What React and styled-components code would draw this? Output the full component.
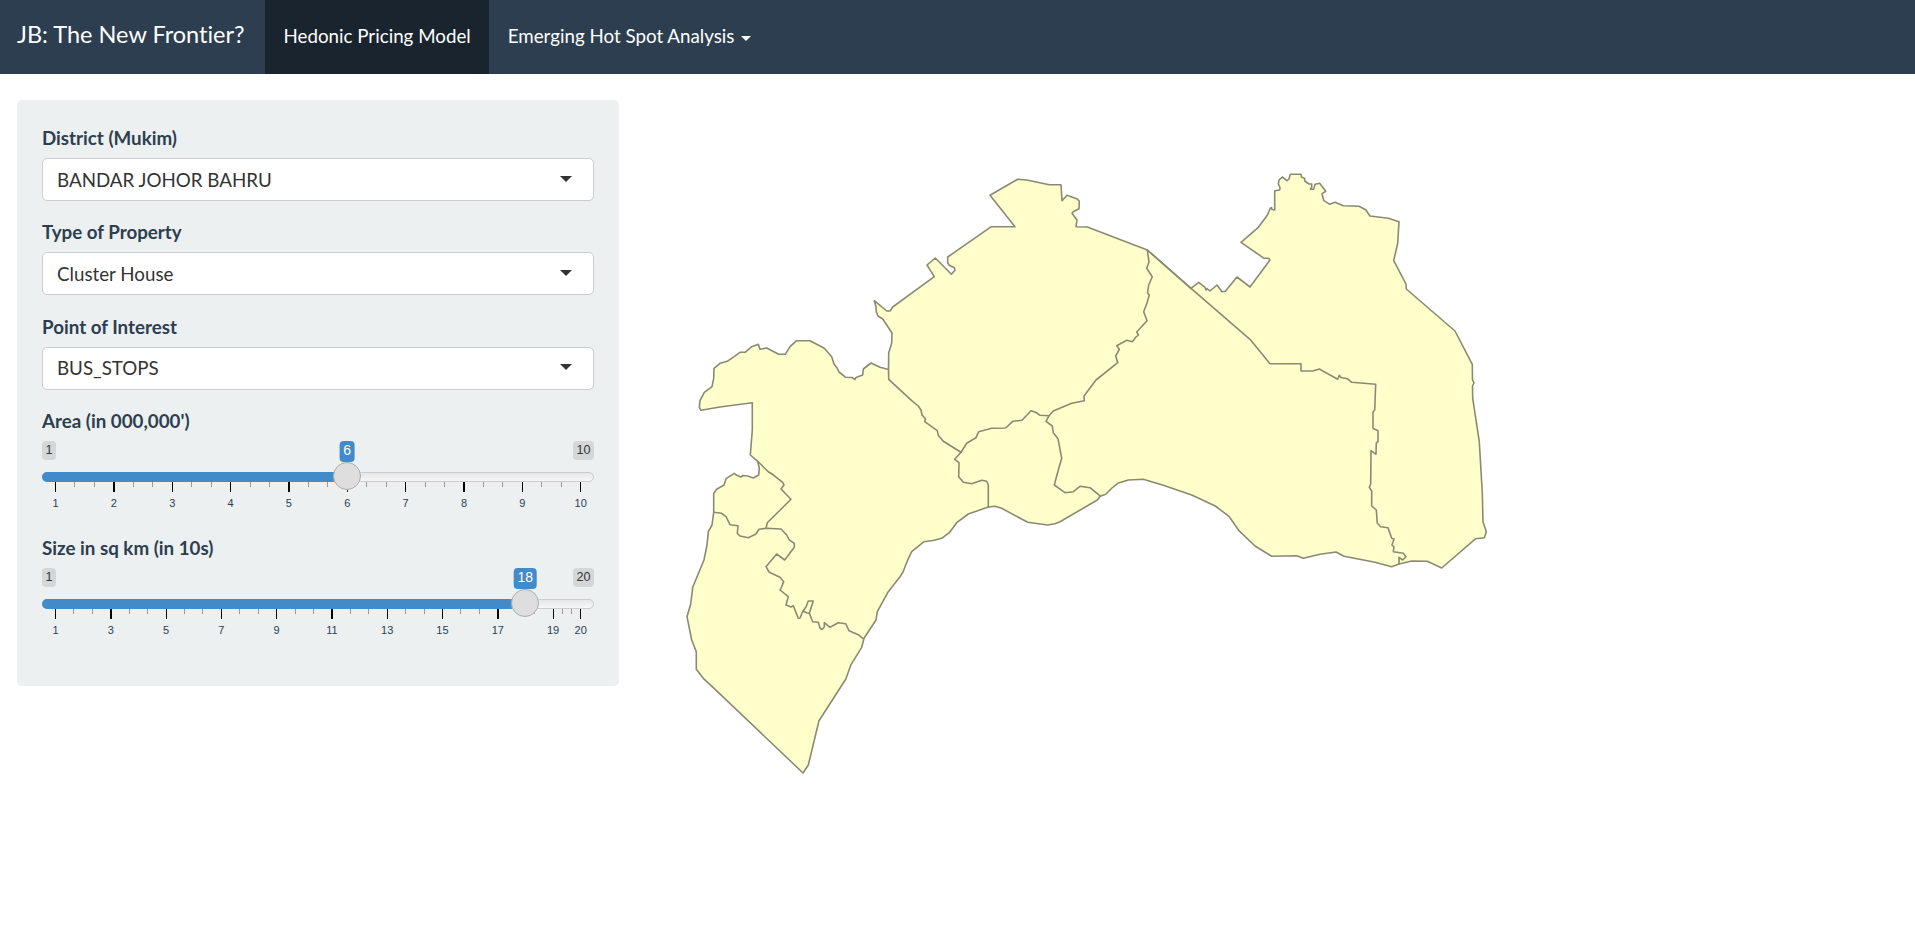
import React from "react";
import styled, { createGlobalStyle } from "styled-components";

const GlobalStyle = createGlobalStyle`
  *, *::before, *::after { box-sizing: border-box; }
  body {
    margin: 0;
    background: #fff;
    color: #2c3e50;
    font-family: Lato, "Liberation Sans", sans-serif;
    font-size: 18.75px;
    font-variant-ligatures: none;
    line-height: 26px;
    overflow: hidden;
  }
`;

const Navbar = styled.nav`
  display: flex;
  height: 74px;
  background: #2c3e50;
  color: #fff;
`;

const Brand = styled.div`
  width: 265px;
  padding: 21px 0 0 17px;
  font-size: 23.5px;
  white-space: nowrap;
`;

const NavItem = styled.div`
  display: flex;
  align-items: flex-start;
  padding: 23px 18.5px 0;
  background: ${(p) => (p.$active ? "#1a242f" : "transparent")};
  white-space: nowrap;
`;

const Caret = styled.span`
  width: 0;
  height: 0;
  border: 5px solid transparent;
  border-top-color: ${(p) => p.$color || "#fff"};
  border-bottom: 0;
`;

const NavCaret = styled(Caret)`
  margin: 13px 0 0 7px;
`;

const Page = styled.main`
  display: flex;
  align-items: flex-start;
  padding: 26px 17px 0;
`;

const Panel = styled.form`
  flex: none;
  width: 602px;
  height: 586px;
  padding: 25px;
  background: #ecf0f1;
  border-radius: 5px;
`;

const Field = styled.div`
  height: ${(p) => p.$height || 94.4}px;
`;

const Label = styled.div`
  height: 33px;
  font-weight: 700;
`;

const Select = styled.div`
  display: flex;
  align-items: center;
  justify-content: space-between;
  height: 43px;
  padding: 0 21px 0 14px;
  background: #fff;
  border: 1px solid #ccc;
  border-radius: 5px;
  color: #333;
`;

const SelectCaret = styled(Caret)`
  border-width: 6px 6px 0;
  margin-top: -2px;
`;

const SliderBox = styled.div`
  position: relative;
  height: 80px;
  font-family: Arial, "Liberation Sans", sans-serif;
`;

const Flags = styled.div`
  display: flex;
  justify-content: space-between;
  height: 31px;
`;

const Flag = styled.span`
  height: 19px;
  padding: 0 3.5px;
  border-radius: 4px;
  background: rgba(0, 0, 0, 0.1);
  color: #333;
  font-size: 12.6px;
  line-height: 18px;
`;

const Track = styled.div`
  height: 10px;
  border: 1px solid #ccc;
  border-radius: 8px;
  background: linear-gradient(#dedede -50%, #fff 150%);
`;

const Fill = styled.div`
  width: ${(p) => p.$to}px;
  height: 10px;
  margin: -1px;
  border-radius: 8px 0 0 8px;
  background: #428bca;
`;

const Handle = styled.span`
  position: absolute;
  left: ${(p) => p.$x}px;
  top: 21px;
  width: 28px;
  height: 28px;
  border: 1px solid #ababab;
  border-radius: 50%;
  background: #dedede;
  box-shadow: 1px 1px 3px rgba(255, 255, 255, 0.3);
  transform: translateX(-50%);
`;

const Value = styled.span`
  position: absolute;
  left: ${(p) => p.$x}px;
  top: 0;
  height: 21px;
  padding: 0 3.5px;
  border-radius: 4px;
  background: #428bca;
  color: #fff;
  font-size: 14px;
  line-height: 19px;
  transform: translateX(-50%);
`;

const Tick = styled.span`
  position: absolute;
  left: ${(p) => p.$x}px;
  top: 41px;
  width: ${(p) => (p.$major ? 1.25 : 1)}px;
  height: ${(p) => (p.$major ? 10 : 5)}px;
  background: ${(p) => (p.$major ? "#000" : "#999")};
`;

const TickLabel = styled.span`
  position: absolute;
  left: ${(p) => p.$x}px;
  top: 55px;
  font-size: 11px;
  line-height: 14px;
  transform: translateX(-50%);
`;

const MapArea = styled.section`
  flex: 1;
  padding: 60px 0 0 61px;
`;

const MapSvg = styled.svg`
  display: block;
  width: 820px;
  height: 620px;
`;

const RAIL_START = 13;
const RAIL_LENGTH = 525.2;

function Slider({ min, max, value, stops }) {
  const at = (v) => RAIL_START + ((v - min) / (max - min)) * RAIL_LENGTH;
  const minors = stops.slice(1).flatMap((s, i) => {
    const gap = (s - stops[i]) / 3;
    return [stops[i] + gap, stops[i] + gap * 2];
  });
  return (
    <SliderBox>
      <Flags>
        <Flag>{min}</Flag>
        <Flag>{max}</Flag>
      </Flags>
      <Track>
        <Fill $to={at(value)} />
      </Track>
      {minors.map((v) => (
        <Tick key={v} $x={at(v)} />
      ))}
      {stops.map((v) => (
        <Tick key={v} $x={at(v)} $major />
      ))}
      {stops.map((v) => (
        <TickLabel key={v} $x={at(v) + 0.5}>{v}</TickLabel>
      ))}
      <Handle $x={at(value) + 0.3} />
      <Value $x={at(value) + 0.3}>{value}</Value>
    </SliderBox>
  );
}

const OUTLINE =
  "888.5,369.5 888.7,352.7 891.7,343.3 892,333 882.7,319 878,316 876.3,311.7 876,306.7 874.3,300.7 886.7,311 890,311 892.7,307 934.3,276.7 927,265 935.3,258 951.3,274.3 955,270.3 954.3,267.7 949.3,265.3 947.7,263 947.7,257 991.3,226.7 1015,226.7 990,195.3 1017.7,179.3 1026.7,180 1049.3,184.7 1061,184.7 1062,200.7 1067,195.3 1077.3,199 1079.3,201.3 1079,208.7 1073.3,211.7 1072,213.3 1077,220 1076,226.7 1087.3,227 1147.3,250 " +
  "1191,288.3 1198.7,282.3 1205,287.3 1206,290 1207,288.5 1210,291 1217,285 1222,291.7 1225.3,291.3 1237,277 1250,287 1270,260 1268.7,258.3 1264,258.3 1241,242.3 1258.3,227.3 1267.3,215.3 1270.3,208.3 1271.5,207.5 1272,209.5 1274.7,210 1274.7,190.7 1279.7,190 1280,187.5 1278.3,184 1279,180 1282.3,177 1287,180.7 1289,179 1290.3,174.3 1301,174.3 1301.5,177 1304.7,178.5 1304.7,181 1309,184 1311.7,184 1311.7,187 1310.3,189.3 1313.7,189.3 1315,184.3 1319.7,183.3 1325.7,191.3 1322,193.7 1323.7,200.3 1329.7,204.3 1335,202.3 1343.3,205.7 1359,206.3 1365.7,209.7 1370,216 1388.3,218.3 1399,221.7 1397.7,243.3 1393.7,260.7 1406,284 1406.3,289 1455,331 1472.3,364.3 " +
  "1472.5,380 1474,383 1472.5,386 1472.7,398.3 1479.3,441.7 1482.3,493.3 1483,521.7 1486.3,531.7 1484.3,537.7 1475.7,538.7 1441.7,568 1427.3,561.3 1411.7,561 1399,564 1391.7,566.7 1375,562.3 1344,556.3 1336,552 1320,554.3 1303.3,558.3 1296.7,555.7 1271.7,556.3 1255,546 1239,530.7 1229.3,516.7 1215.3,506 1191.7,495 1163.3,485.3 1143.3,479.3 1128.3,480 1117.7,483.3 1112,488 1105.7,494.3 1100,496.3 1097.3,500 1060,521.7 1055,523.7 1047.7,525 1027.7,522.3 1001.7,508.3 995,506.3 988.3,507 968.3,514 956.7,522.7 949.3,532.7 941.7,538.3 933,540.5 924,541.7 911.7,551.7 907.7,560 " +
  "903,572 900,576.7 888.3,591.7 877.3,611.7 876,620 864,638.3 861.7,647.3 851,664.7 845.7,679.3 819,720.7 808.3,765 803,773 713.3,687.7 703.3,678.3 696.3,669.3 696.3,651.7 691.7,640 687,616.7 690.7,604 692.7,587.3 704,560 707,545 708.3,531.7 712,525 713.7,512.3 713.7,493.3 716.7,489.3 724,485 726,478.7 734.3,473.3 736.7,475.3 741,477 743,475.5 747.7,476 753.3,478 758.7,475 759.3,468.3 757.7,461.3 750.3,455 752.3,430 752.3,402.7 720,407 701,410.3 699.3,407.3 700,400.7 704.3,392.3 712,386.7 713.7,378.3 714,368.3 720,363.3 727.3,361.3 740,352.3 745,352.3 751.7,346.7 758.3,344.3 760,349.3 766.7,348 778.7,354.3 785.3,354.3 790,346.7 796.7,340.7 810,340.7 824.3,348.3 831.7,356.7 834,364 837.3,368.3 839,372 845.7,377.3 852,377.5 855,379.5 856,377.5 862.7,375 863.3,369 871,363 880,367.3";

const BORDERS = [
  "888.5,369.5 888.7,379.3 911.7,400.7 918.3,406 921,410 922,415 925.5,419 924.7,421.7 937.3,430.7 938.3,435.3 943.3,441.3 961,452.3",
  "961,452.3 966.7,443.3 976,437.7 978.7,431.7 991.7,428.3 1005.7,428 1012.7,421.3 1022,420.3 1031,410.7 1036,412.5 1040,415.3 1049,415.7 1053.3,411 1063.3,406.7 1071.7,403.3 1084.3,400.7 1084,396 1096,380 1117.7,362.7 1115.7,356 1119.3,349.3 1116.7,345.7 1126.7,340.3 1132.3,341.7 1136,337 1138.5,335 1136.7,332 1147,320.7 1143.7,311.7 1147,303 1149.3,295 1147.5,293 1148.7,285 1152.3,276.7 1146.7,268.3 1149,262 1147.3,250",
  "961,452.3 954.7,459.3 959,462.7 958.7,476.7 963.3,482.3 971.7,483.7 981.7,480.3 986.7,481.3 988.3,485 988.3,507",
  "1049,415.7 1046,421.3 1052.3,426 1053.3,432.7 1058,438.7 1061.7,458.3 1058,471 1054.3,485 1065,492.7 1073.3,491.7 1080,486.3 1090,487.7 1100.7,496.3",
  "1191,288.3 1250,339.3 1270,363.7 1301,363.7 1301,371 1312.7,371 1319.3,369 1337.7,379.3 1339.3,375.3 1341,377.5 1347.3,378.7 1351.7,382.3 1375.7,384.3 1374.7,410 1373,412 1373,428.3 1378,430.7 1378,441.7 1376.3,443 1376,454.3 1371,450.7 1370.7,484 1369.3,487.3 1371.7,491 1371.7,506 1376.3,510 1377.3,523.3 1380.7,526.7 1388,527.7 1391.7,538.3 1394,539 1392,545 1394,547 1393.3,551.7 1403.3,553.3 1406,556.7 1402.7,560 1399,557.3 1399,564",
  "757.7,461.3 768.3,471.7 772,474 782.7,482.3 784,485 781,489 791,499.3 767.3,522.7 766,528.3",
  "713.7,512.3 721.7,513.3 726,516.7 730,524.7 738,525.7 737.3,533.3 740,536 748.3,537.7 756,534 759,529.3 766,528.3 781,529 786.7,535 789.3,540 794.3,543.3 794.3,547.3 784.7,560 776.7,554 766,566.7 769.3,572.3 780,577.3 783.7,581.7 782,586 780,590 788.3,596.7 786,605 791,607 793.3,605.7 798.3,618.3 800,618 803,611 806,607 808.3,601 813.3,601 809.3,613.3 807,613 803,611",
  "809.3,613.3 812.7,621.7 818.3,622.3 820,628 822,629.5 824.3,627 824.3,622.7 830,627.3 838.3,622.7 845.7,623.7 849,630.7 858.3,634.7 862.7,638.3",
];

function DistrictMap() {
  return (
    <MapSvg
      viewBox="680 160 820 620"
      fill="none"
      stroke="#8a8a74"
      strokeWidth="1.6"
      strokeLinejoin="round"
      strokeLinecap="round"
    >
      <polygon points={OUTLINE} fill="#ffffcc" />
      {BORDERS.map((b) => (
        <polyline key={b} points={b} />
      ))}
      <polyline points="1147.3,250 1191,288.3" />
    </MapSvg>
  );
}

const SELECTS = [
  ["District (Mukim)", "BANDAR JOHOR BAHRU"],
  ["Type of Property", "Cluster House"],
  ["Point of Interest", "BUS_STOPS"],
];

export default function App() {
  return (
    <>
      <GlobalStyle />
      <Navbar>
        <Brand>JB: The New Frontier?</Brand>
        <NavItem $active>Hedonic Pricing Model</NavItem>
        <NavItem>
          Emerging Hot Spot Analysis
          <NavCaret />
        </NavItem>
      </Navbar>
      <Page>
        <Panel>
          {SELECTS.map(([label, value]) => (
            <Field key={label}>
              <Label>{label}</Label>
              <Select>
                {value}
                <SelectCaret $color="#333" />
              </Select>
            </Field>
          ))}
          <Field $height={127}>
            <Label>Area (in 000,000')</Label>
            <Slider min={1} max={10} value={6} stops={[1, 2, 3, 4, 5, 6, 7, 8, 9, 10]} />
          </Field>
          <Field $height={127}>
            <Label>Size in sq km (in 10s)</Label>
            <Slider min={1} max={20} value={18} stops={[1, 3, 5, 7, 9, 11, 13, 15, 17, 19, 20]} />
          </Field>
        </Panel>
        <MapArea>
          <DistrictMap />
        </MapArea>
      </Page>
    </>
  );
}
